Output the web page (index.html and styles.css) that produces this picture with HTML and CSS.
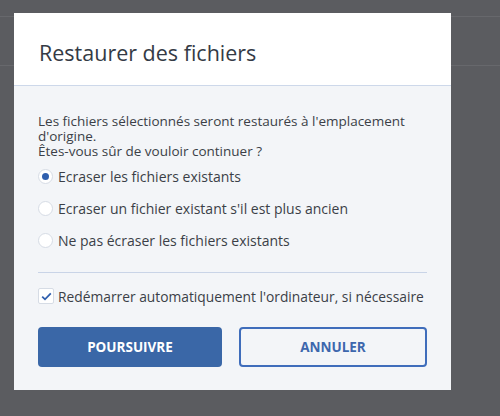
FILE: index.html
```html
<html>
<head>
<title>Restaurer des fichiers</title>
<link rel="stylesheet" href="styles.css">
</head>
<body>

<div id="page">
  <div class="page_top"></div>
  <div class="page_bar"></div>
</div>

<div id="dialog">
  <div class="dialog_head">
    <h1>Restaurer des fichiers</h1>
  </div>

  <div class="dialog_body">
    <p class="intro">Les fichiers sélectionnés seront restaurés à l'emplacement d'origine.<br>
    Êtes-vous sûr de vouloir continuer ?</p>

    <div class="options">
      <label class="option"><span class="radio checked"></span>Ecraser les fichiers existants</label>
      <label class="option"><span class="radio"></span>Ecraser un fichier existant s'il est plus ancien</label>
      <label class="option"><span class="radio"></span>Ne pas écraser les fichiers existants</label>
    </div>

    <div class="separator"></div>

    <label class="option check_row">
      <span class="checkbox">
        <svg width="11" height="9" viewBox="0 0 11 9"><path d="M1.2 4.6 L4 7.3 L9.8 1.3" fill="none" stroke="#2f5fae" stroke-width="1.8"/></svg>
      </span>Redémarrer automatiquement l'ordinateur, si nécessaire
    </label>

    <div class="buttons">
      <a class="button primary">POURSUIVRE</a>
      <a class="button secondary">ANNULER</a>
    </div>
  </div>
</div> <!-- End of "dialog" -->

</body>
</html>
```

FILE: styles.css
```css
body {
  margin: 0;
  background-color: #5b5c60;
  font-family: "Open Sans", "Noto Sans", sans-serif;
  color: #3b3f47;
}
div#page {
  height: 416px;
}
div.page_top {
  height: 16px;
  border-bottom: 1px solid #67686c;
}
div.page_bar {
  height: 48px;
  border-bottom: 1px solid #67686c;
}
div#dialog {
  position: absolute;
  left: 14px;
  top: 13px;
  width: 437px;
  height: 377px;
  display: flex;
  flex-direction: column;
  background-color: #f3f5f8;
}
div.dialog_head {
  height: 72px;
  background-color: #ffffff;
  border-bottom: 1px solid #cdd8ea;
  padding-left: 25px;
}
div.dialog_head h1 {
  margin: 0;
  padding-top: 25px;
  font-size: 21.5px;
  font-weight: normal;
  line-height: 30px;
  color: #343a45;
}
div.dialog_body {
  padding: 28px 24px 0 24px;
  font-size: 13.5px;
  line-height: 15px;
}
p.intro {
  margin: 0;
}
div.options {
  display: flex;
  flex-direction: column;
  gap: 12px;
  margin-top: 7px;
}
label.option {
  display: flex;
  align-items: center;
  height: 20px;
  font-size: 14px;
  white-space: nowrap;
}
span.radio {
  width: 13px;
  height: 13px;
  margin-right: 5px;
  border: 1px solid #d6dce5;
  border-radius: 50%;
  background-color: #ffffff;
  display: flex;
  align-items: center;
  justify-content: center;
}
span.radio.checked::after {
  content: "";
  width: 7px;
  height: 7px;
  border-radius: 50%;
  background-color: #2f5fae;
}
div.separator {
  height: 1px;
  margin-top: 22px;
  background-color: #c9d4e7;
}
label.check_row {
  margin-top: 13px;
  font-size: 13.8px;
}
span.checkbox {
  width: 14px;
  height: 14px;
  margin-right: 4px;
  border: 1px solid #d6dce5;
  border-radius: 2px;
  background-color: #ffffff;
  display: flex;
  align-items: center;
  justify-content: center;
}
div.buttons {
  display: flex;
  gap: 17px;
  margin-top: 21px;
}
a.button {
  flex: 1;
  height: 40px;
  display: flex;
  align-items: center;
  justify-content: center;
  box-sizing: border-box;
  border-radius: 4px;
  font-size: 13.5px;
  font-weight: bold;
}
a.primary {
  background-color: #3a67a7;
  color: #ffffff;
}
a.secondary {
  border: 2px solid #3f6dbb;
  color: #3d67ad;
}
```
